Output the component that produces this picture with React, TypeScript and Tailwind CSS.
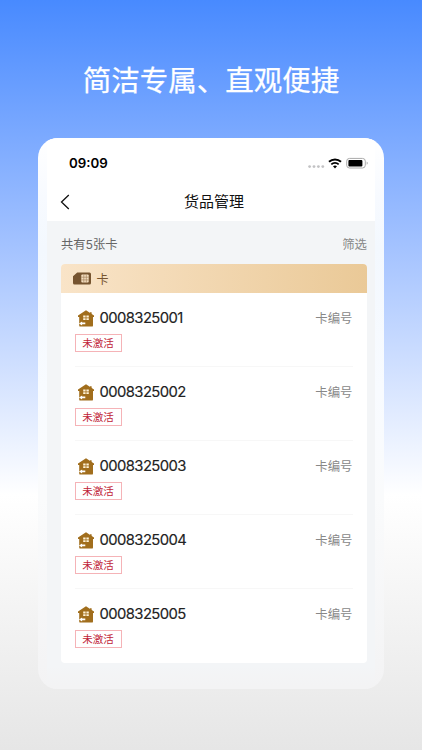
import React from 'react';

const cards = ['0008325001', '0008325002', '0008325003', '0008325004', '0008325005'];

const StatusIcons: React.FC = () => (
  <svg width="62" height="12" viewBox="0 0 62 12" fill="none">
    {[2.6, 7, 11.4, 15.8].map((x) => (
      <circle key={x} cx={x} cy="9.6" r="1.4" fill="#c2c2c4" />
    ))}
    <path d="M22 4.8a9 9 0 0 1 12 0" stroke="#000" strokeWidth="2.1" />
    <path d="M24.3 7.4a5.6 5.6 0 0 1 7.4 0" stroke="#000" strokeWidth="1.8" />
    <path d="M28 11.4l-2-2.1a3 3 0 0 1 4 0z" fill="#000" />
    <rect x="39.7" y="1.4" width="18.6" height="9.6" rx="2.8" stroke="#a9a9a9" />
    <rect x="41.4" y="3" width="14" height="6.4" rx="1" fill="#000" />
    <path d="M59.7 4.6c1.4.5 1.4 2.7 0 3.2z" fill="#a9a9a9" />
  </svg>
);

const SimIcon: React.FC = () => (
  <svg width="18" height="13" viewBox="0 0 18 13">
    <path d="M4.2.4h12.3A1.5 1.5 0 0 1 18 1.9v9.2a1.5 1.5 0 0 1-1.5 1.5h-15A1.5 1.5 0 0 1 0 11.1V4.2z" fill="#76542f" />
    <rect x="8.3" y="2.6" width="7.4" height="8" rx="1" fill="#f5dfc1" />
    <path d="M10.8 2.6v8M13.3 2.6v8M8.3 5.2h7.4M8.3 7.9h7.4" stroke="#9a7850" strokeWidth=".6" />
  </svg>
);

const HouseIcon: React.FC = () => (
  <svg width="16" height="17" viewBox="0 0 16 17">
    <path d="M8 .2l8 5.3v1.6h-1v8.3a1.2 1.2 0 0 1-1.2 1.2H2.4a1.2 1.2 0 0 1-1.2-1.2V7.1H0V5.5z" fill="#a16e1d" />
    <path d="M12 2.2h1.6v2.6H12z" fill="#a16e1d" />
    <path d="M5.2 5.6h2.4v1.8H5.2zM8.4 5.6h2.4v1.8H8.4zM5.2 8.2h2.4V10H5.2zM8.4 8.2h2.4V10H8.4z" fill="#fff3d9" />
    <path d="M1 13.4l3.1-2v1.2h3.2v1.7H4.1v1.2z" fill="#fff" />
  </svg>
);

const CardRow: React.FC<{ code: string; last: boolean }> = ({ code, last }) => (
  <li className="px-3.5">
    <div className={`h-[74.1px] pt-[15px] ${last ? '' : 'border-b border-[#f7f7f7]'}`}>
      <div className="flex h-5 items-center pl-[3px]">
        <HouseIcon />
        <span className="ml-1.5 text-[14.8px] leading-5 tracking-[-0.58px] text-[#222] [-webkit-text-stroke:0.15px_#222]">
          {code}
        </span>
        <span className="ml-auto pt-0.5 text-[12.4px] text-[#888]">卡编号</span>
      </div>
      <span className="mt-[6px] flex h-[18px] w-[47px] items-center justify-center border border-[#f5b3b7] pt-0.5 text-[10.5px] leading-none text-[#c01c36]">
        未激活
      </span>
    </div>
  </li>
);

const App: React.FC = () => {
  return (
    <div className="h-[750px] w-[422px] overflow-hidden bg-[linear-gradient(180deg,#488aff_0px,#79a8ff_130px,#a3c2ff_245px,#cfdfff_365px,#ffffff_495px,#e6e6e6_750px)] font-['Inter','Noto_Sans_CJK_SC',sans-serif]">
      <h1 className="flex h-[138px] items-center justify-center pt-[24px] text-[28.5px] leading-none text-white [-webkit-text-stroke:0.25px_#fff]">
        简洁专属、直观便捷
      </h1>

      <div className="mx-auto h-[551px] w-[346px] overflow-hidden rounded-[20px] bg-[linear-gradient(180deg,#ffffff_0px,#f7faff_60px,#f3f8fe_110px,#f8fbff_250px,#fafbfc_360px,#f3f3f4_551px)] px-[9px]">
        <div className="flex h-full flex-col bg-[linear-gradient(180deg,#f3f5f7_0px,#f3f5f7_528px,#f3f3f4_548px)]">
          <header className="h-[83px] shrink-0 bg-white">
            <div className="flex h-[50px] items-center justify-between pl-[22px] pr-[6px]">
              <span className="pt-px text-[13.3px] font-semibold text-black">09:09</span>
              <StatusIcons />
            </div>
            <div className="grid h-[28px] grid-cols-3 items-center pl-[13px] pr-[7px]">
              <svg width="10" height="16" viewBox="0 0 10 16" fill="none">
                <path d="M8.8 1L1.5 8l7.3 7" stroke="#111" strokeWidth="1.3" />
              </svg>
              <span className="text-center text-[15px] text-[#111]">货品管理</span>
            </div>
          </header>

          <div className="flex h-[43px] shrink-0 items-center justify-between pl-[14px] pr-[8px] pt-1.5">
            <span className="text-[12.3px] text-[#666]">共有5张卡</span>
            <span className="text-[12.4px] text-[#888]">筛选</span>
          </div>

          <div className="ml-[13.5px] mr-[8.5px] overflow-hidden rounded-[4px] bg-white">
            <div className="flex h-[29px] items-center gap-1.5 bg-linear-to-r from-[#f9e4c8] to-[#eac997] pl-3">
              <SimIcon />
              <span className="pt-0.5 text-[12px] text-[#76542f]">卡</span>
            </div>
            <ul>
              {cards.map((code, i) => (
                <CardRow key={code} code={code} last={i === cards.length - 1} />
              ))}
            </ul>
          </div>
        </div>
      </div>
    </div>
  );
};

export default App;
